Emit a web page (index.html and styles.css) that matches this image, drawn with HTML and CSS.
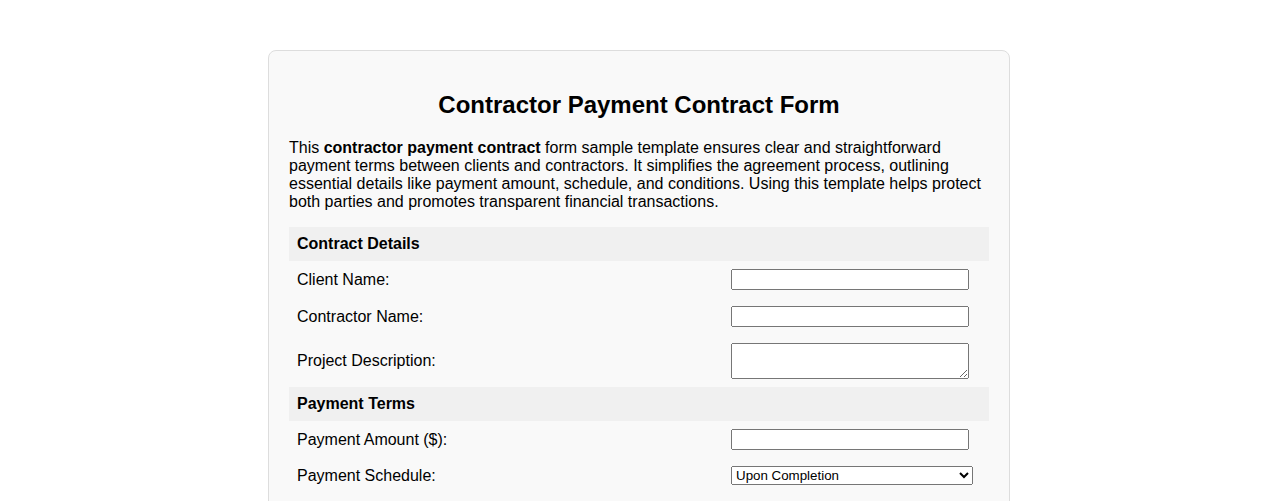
FILE: index.html
```html
<!DOCTYPE html>
<html lang="en">
<head>
    <meta charset="UTF-8">
    <meta name="viewport" content="width=device-width, initial-scale=1.0">
    <title>Contractor Payment Contract Form</title>
    <link rel="stylesheet" href="styles.css">
</head>
<body>
    <div class="container">
        <h1>Contractor Payment Contract Form</h1>
        <p>This <strong>contractor payment contract</strong> form sample template ensures clear and straightforward payment terms between clients and contractors. It simplifies the agreement process, outlining essential details like payment amount, schedule, and conditions. Using this template helps protect both parties and promotes transparent financial transactions.</p>

        <form>
            <table class="form-table">
                <tr>
                    <th colspan="2" class="section">Contract Details</th>
                </tr>
                <tr>
                    <td class="label"><label for="client">Client Name:</label></td>
                    <td><input type="text" id="client" name="client"></td>
                </tr>
                <tr>
                    <td class="label"><label for="contractor">Contractor Name:</label></td>
                    <td><input type="text" id="contractor" name="contractor"></td>
                </tr>
                <tr>
                    <td class="label"><label for="description">Project Description:</label></td>
                    <td><textarea id="description" name="description" rows="2"></textarea></td>
                </tr>
                <tr>
                    <th colspan="2" class="section">Payment Terms</th>
                </tr>
                <tr>
                    <td class="label"><label for="amount">Payment Amount ($):</label></td>
                    <td><input type="text" id="amount" name="amount"></td>
                </tr>
                <tr>
                    <td class="label"><label for="schedule">Payment Schedule:</label></td>
                    <td>
                        <select id="schedule" name="schedule">
                            <option>Upon Completion</option>
                            <option>Milestone Payments</option>
                            <option>Weekly</option>
                            <option>Monthly</option>
                        </select>
                    </td>
                </tr>
                <tr>
                    <td class="label"><label for="due">Payment Due Date:</label></td>
                    <td><input type="date" id="due" name="due"></td>
                </tr>
            </table>
        </form>
    </div>
</body>
</html>
```

FILE: styles.css
```css
body {
    margin: 0;
    font-family: "Liberation Sans", Arial, sans-serif;
    font-size: 16px;
    color: #000;
    background: #fff;
}
.container {
    max-width: 700px;
    margin: 50px auto;
    padding: 20px;
    background: #f9f9f9;
    border: 1px solid #ddd;
    border-radius: 8px;
}
h1 {
    font-size: 24px;
    text-align: center;
    margin: 20px 0;
}
p {
    margin: 16px 0;
}
.form-table {
    width: 100%;
    border-collapse: collapse;
}
.form-table td,
.form-table th {
    padding: 8px;
    text-align: left;
}
.form-table .section {
    background: #f0f0f0;
    font-weight: bold;
}
.form-table .label {
    width: 62%;
}
.form-table input,
.form-table textarea {
    width: 95%;
    box-sizing: border-box;
    vertical-align: middle;
}
.form-table textarea {
    display: block;
}
.form-table select {
    width: 242px;
}
```
